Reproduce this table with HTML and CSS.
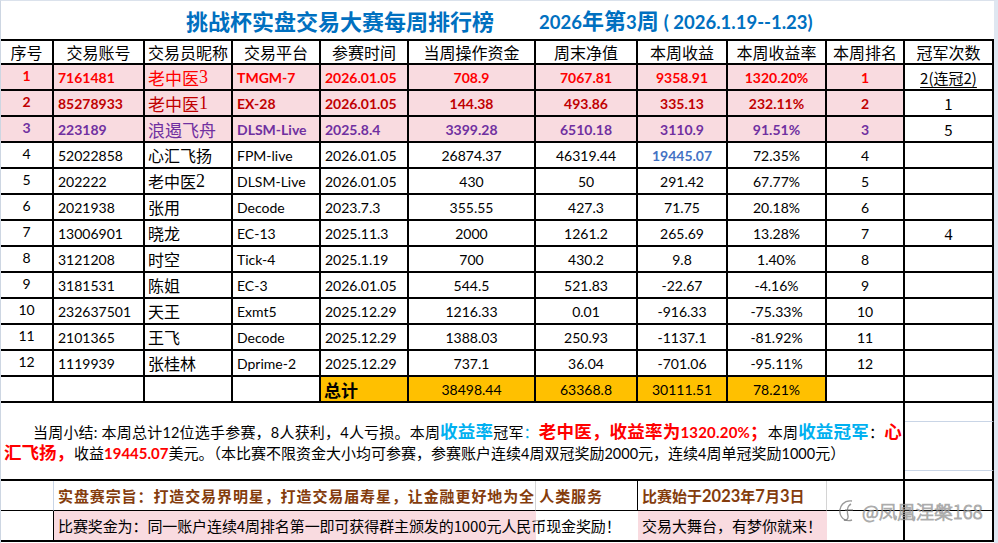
FILE: index.html
```html
<!DOCTYPE html>
<html lang="zh-CN">
<head>
<meta charset="utf-8">
<title>挑战杯实盘交易大赛每周排行榜</title>
<link rel="stylesheet" href="styles.css">
</head>
<body>
<div class="page">
  <header class="title">
    <h1 class="t1">挑战杯实盘交易大赛每周排行榜</h1>
    <h2 class="t2"><span class="tn">2026</span>年第<span class="tn">3</span>周 <span class="tn">( 2026.1.19--1.23)</span></h2>
  </header>

  <div class="grid">
    <div class="c h">序号</div>
    <div class="c h">交易账号</div>
    <div class="c h">交易员昵称</div>
    <div class="c h">交易平台</div>
    <div class="c h">参赛时间</div>
    <div class="c h">当周操作资金</div>
    <div class="c h">周末净值</div>
    <div class="c h">本周收益</div>
    <div class="c h">本周收益率</div>
    <div class="c h">本周排名</div>
    <div class="c h">冠军次数</div>

    <div class="c pk red b ctr no">1</div>
    <div class="c pk red b lft">7161481</div>
    <div class="c pk red nick big">老中医<span class="ser">3</span></div>
    <div class="c pk red b lft">TMGM-7</div>
    <div class="c pk red b lft">2026.01.05</div>
    <div class="c pk red b ctr">708.9</div>
    <div class="c pk red b ctr">7067.81</div>
    <div class="c pk red b ctr">9358.91</div>
    <div class="c pk red b ctr">1320.20%</div>
    <div class="c pk red b ctr">1</div>
    <div class="c champ"><u>2(连冠2)</u></div>

    <div class="c pk dred b ctr no">2</div>
    <div class="c pk dred b lft">85278933</div>
    <div class="c pk dred nick big">老中医<span class="ser">1</span></div>
    <div class="c pk dred b lft">EX-28</div>
    <div class="c pk dred b lft">2026.01.05</div>
    <div class="c pk dred b ctr">144.38</div>
    <div class="c pk dred b ctr">493.86</div>
    <div class="c pk dred b ctr">335.13</div>
    <div class="c pk dred b ctr">232.11%</div>
    <div class="c pk dred b ctr">2</div>
    <div class="c champ">1</div>

    <div class="c pk pur b ctr no">3</div>
    <div class="c pk pur b lft">223189</div>
    <div class="c pk pur nick big">浪遏飞舟</div>
    <div class="c pk pur b lft">DLSM-Live</div>
    <div class="c pk pur b lft">2025.8.4</div>
    <div class="c pk pur b ctr">3399.28</div>
    <div class="c pk pur b ctr">6510.18</div>
    <div class="c pk pur b ctr">3110.9</div>
    <div class="c pk pur b ctr">91.51%</div>
    <div class="c pk pur b ctr">3</div>
    <div class="c champ">5</div>

    <div class="c ctr no">4</div>
    <div class="c lft">52022858</div>
    <div class="c nick">心汇飞扬</div>
    <div class="c lft">FPM-live</div>
    <div class="c lft">2026.01.05</div>
    <div class="c ctr">26874.37</div>
    <div class="c ctr">46319.44</div>
    <div class="c ctr b blue">19445.07</div>
    <div class="c ctr">72.35%</div>
    <div class="c ctr">4</div>
    <div class="c champ"></div>

    <div class="c ctr no">5</div>
    <div class="c lft">202222</div>
    <div class="c nick">老中医<span class="ser">2</span></div>
    <div class="c lft">DLSM-Live</div>
    <div class="c lft">2026.01.05</div>
    <div class="c ctr">430</div>
    <div class="c ctr">50</div>
    <div class="c ctr">291.42</div>
    <div class="c ctr">67.77%</div>
    <div class="c ctr">5</div>
    <div class="c champ"></div>

    <div class="c ctr no">6</div>
    <div class="c lft">2021938</div>
    <div class="c nick">张用</div>
    <div class="c lft">Decode</div>
    <div class="c lft">2023.7.3</div>
    <div class="c ctr">355.55</div>
    <div class="c ctr">427.3</div>
    <div class="c ctr">71.75</div>
    <div class="c ctr">20.18%</div>
    <div class="c ctr">6</div>
    <div class="c champ"></div>

    <div class="c ctr no">7</div>
    <div class="c lft">13006901</div>
    <div class="c nick">晓龙</div>
    <div class="c lft">EC-13</div>
    <div class="c lft">2025.11.3</div>
    <div class="c ctr">2000</div>
    <div class="c ctr">1261.2</div>
    <div class="c ctr">265.69</div>
    <div class="c ctr">13.28%</div>
    <div class="c ctr">7</div>
    <div class="c champ ser4">4</div>

    <div class="c ctr no">8</div>
    <div class="c lft">3121208</div>
    <div class="c nick">时空</div>
    <div class="c lft">Tick-4</div>
    <div class="c lft">2025.1.19</div>
    <div class="c ctr">700</div>
    <div class="c ctr">430.2</div>
    <div class="c ctr">9.8</div>
    <div class="c ctr">1.40%</div>
    <div class="c ctr">8</div>
    <div class="c champ"></div>

    <div class="c ctr no">9</div>
    <div class="c lft">3181531</div>
    <div class="c nick">陈姐</div>
    <div class="c lft">EC-3</div>
    <div class="c lft">2026.01.05</div>
    <div class="c ctr">544.5</div>
    <div class="c ctr">521.83</div>
    <div class="c ctr">-22.67</div>
    <div class="c ctr">-4.16%</div>
    <div class="c ctr">9</div>
    <div class="c champ"></div>

    <div class="c ctr no">10</div>
    <div class="c lft">232637501</div>
    <div class="c nick">天王</div>
    <div class="c lft">Exmt5</div>
    <div class="c lft">2025.12.29</div>
    <div class="c ctr">1216.33</div>
    <div class="c ctr">0.01</div>
    <div class="c ctr">-916.33</div>
    <div class="c ctr">-75.33%</div>
    <div class="c ctr">10</div>
    <div class="c champ"></div>

    <div class="c ctr no">11</div>
    <div class="c lft">2101365</div>
    <div class="c nick">王飞</div>
    <div class="c lft">Decode</div>
    <div class="c lft">2025.12.29</div>
    <div class="c ctr">1388.03</div>
    <div class="c ctr">250.93</div>
    <div class="c ctr">-1137.1</div>
    <div class="c ctr">-81.92%</div>
    <div class="c ctr">11</div>
    <div class="c champ"></div>

    <div class="c ctr no">12</div>
    <div class="c lft">1119939</div>
    <div class="c nick">张桂林</div>
    <div class="c lft">Dprime-2</div>
    <div class="c lft">2025.12.29</div>
    <div class="c ctr">737.1</div>
    <div class="c ctr">36.04</div>
    <div class="c ctr">-701.06</div>
    <div class="c ctr">-95.11%</div>
    <div class="c ctr">12</div>
    <div class="c champ"></div>

    <div class="c"></div>
    <div class="c"></div>
    <div class="c"></div>
    <div class="c"></div>
    <div class="c gold total">总计</div>
    <div class="c gold ctr">38498.44</div>
    <div class="c gold ctr">63368.8</div>
    <div class="c gold ctr">30111.51</div>
    <div class="c gold ctr">78.21%</div>
    <div class="c"></div>
    <div class="c"></div>

    <div class="c summary">
      <p class="l1">当周小结<span class="n">: </span>本周总计<span class="n">12</span>位选手参赛，<span class="n">8</span>人获利，<span class="n">4</span>人亏损。本周<b class="cy">收益率</b>冠军<span class="cy">：</span><b class="rd">老中医，收益率为<span class="nb">1320.20%</span>；</b>本周<b class="cy">收益冠军</b>：<b class="rd">心</b></p>
      <p class="l2"><b class="rd">汇飞扬，</b>收益<b class="rd nb">19445.07</b>美元。（本比赛不限资金大小均可参赛，参赛账户连续<span class="n">4</span>周双冠奖励<span class="n">2000</span>元，连续<span class="n">4</span>周单冠奖励<span class="n">1000</span>元）</p>
    </div>
    <div class="c s1"></div>
    <div class="c s2"></div>
    <div class="c s3"></div>

    <div class="c fa"></div>
    <div class="c fb">实盘赛宗旨：打造交易界明星，打造交易届寿星，让金融更好地为全 人类服务</div>
    <div class="c fc"></div>
    <div class="c fd">比赛始于<span class="fn">2023</span>年<span class="fn">7</span>月<span class="fn">3</span>日</div>
    <div class="c fe"></div>
    <div class="c ff"></div>

    <div class="c ga"></div>
    <div class="c gb">比赛奖金为：同一账户连续4周排名第一即可获得群主颁发的1000元人民币现金奖励！</div>
    <div class="c gc"></div>
    <div class="c gd">交易大舞台，有梦你就来！</div>
    <div class="c ge"></div>
    <div class="c gf"></div>
  </div>

  <div class="mark">
    <svg class="mark-logo" width="22" height="26" viewBox="0 0 22 26" aria-hidden="true">
      <path d="M15 3 C7 2 2 8 3 15 C4 21 10 24 15 22" fill="none" stroke="rgba(110,110,110,0.7)" stroke-width="1.4"/>
      <path d="M14 6 C10 8 10 14 11 18 C11.5 21 9 23 7 22" fill="none" stroke="rgba(110,110,110,0.7)" stroke-width="1.4"/>
      <path d="M8 12 L16 12" fill="none" stroke="rgba(110,110,110,0.7)" stroke-width="1.4"/>
    </svg>
    <span class="mark-text">@凤凰涅槃168</span>
  </div>
</div>
</body>
</html>
```

FILE: styles.css
```css
html, body {
  margin: 0;
  padding: 0;
  background: #ffffff;
}

body {
  font-family: "Noto Sans CJK SC", sans-serif;
  color: #000;
  overflow: hidden;
}

.page {
  position: relative;
  width: 998px;
  height: 543px;
  box-sizing: border-box;
  border-left: 1px solid #cdd6e2;
  border-top: 1px solid #dbe2ec;
  border-right: 4px solid #dfe7f1;
  overflow: hidden;
}

.title {
  height: 38px;
  display: flex;
  align-items: center;
  padding-left: 185px;
  gap: 45px;
  color: #0070c0;
}

.t1, .t2 {
  margin: 0;
  font-weight: 700;
  font-size: 22px;
  line-height: 1;
  white-space: nowrap;
}

.t2 .tn {
  font-family: "Lato", "Noto Sans CJK SC", sans-serif;
  font-size: 18.5px;
  font-weight: 700;
}

.grid {
  display: grid;
  grid-template-columns: 53px 91px 88px 88px 88px 127px 102px 90px 99px 78px 89px;
  grid-template-rows: 24px repeat(13, 26px) 19px 49px 10px 30px 31px;
  border-top: 2px solid #000;
}

.c {
  box-sizing: border-box;
  border-right: 2px solid #000;
  border-bottom: 2px solid #000;
  display: flex;
  align-items: center;
  font-family: "Lato", "Noto Sans CJK SC", sans-serif;
  font-size: 14px;
  white-space: nowrap;
  min-width: 0;
}

.h {
  justify-content: center;
  font-family: "Noto Sans CJK SC", sans-serif;
  font-size: 16px;
  font-weight: 400;
}

.ctr { justify-content: center; }
.lft { padding-left: 4px; }
.no { padding-bottom: 3px; }
.b { font-weight: 700; }

.nick {
  padding-left: 3px;
  font-family: "Noto Sans CJK SC", sans-serif;
  font-size: 16px;
}
.nick.big { font-size: 17px; }
.nick .ser { font-family: "Liberation Serif", serif; font-size: 18px; }

.pk { background: #f9dbe0; }
.red { color: #ff0000; }
.dred { color: #c00000; }
.pur { color: #7030a0; }
.blue { color: #4472c4; }

.champ {
  justify-content: center;
  font-family: "Noto Sans CJK SC", sans-serif;
  font-size: 15px;
}
.champ u { text-underline-offset: 3px; }
.ser4 { font-family: "Liberation Serif", serif; font-size: 16px; padding-top: 4px; }

.gold { background: #ffc000; }
.total {
  padding-left: 3px;
  font-family: "Noto Sans CJK SC", sans-serif;
  font-size: 17px;
  font-weight: 700;
}

.summary {
  grid-column: 1 / 11;
  grid-row: 15 / 18;
  display: block;
  padding: 18px 0 0 3px;
  font-family: "Noto Sans CJK SC", sans-serif;
  font-size: 15px;
  white-space: normal;
}
.summary p {
  margin: 0;
  height: 20px;
  line-height: 20px;
  white-space: nowrap;
}
.summary .l1 { text-indent: 29px; letter-spacing: 0.2px; }
.summary .l2 { margin-top: 1px; }
.summary .n { font-family: "Lato", sans-serif; font-size: 14.5px; }
.summary b { font-size: 17.5px; font-weight: 700; }
.summary .cy { color: #00b0f0; }
.summary .rd { color: #ff0000; }
.summary .nb { font-family: "Lato", sans-serif; font-size: 15px; font-weight: 700; }

.s1 { grid-column: 11; grid-row: 15; border-bottom: 1px solid #c9d5e6; }
.s2 { grid-column: 11; grid-row: 16; border-bottom: 1px solid #c9d5e6; }
.s3 { grid-column: 11; grid-row: 17; }

.fa, .fb, .fc, .fd, .fe, .ff { border-bottom: 1px solid #000; }
.fa { border-right: 1px solid #c9d5e6; }
.fb {
  grid-column: 2 / 7;
  border-right: 1px solid #d4d4d4;
  padding-left: 4px;
  overflow: visible;
  color: #843c0c;
  font-family: "Noto Sans CJK SC", sans-serif;
  font-size: 15px;
  font-weight: 700;
  letter-spacing: 0.9px;
}
.fc { border-right: 1px solid #000; }
.fd {
  grid-column: 8 / 10;
  border-right: 1px solid #d4d4d4;
  padding-left: 4px;
  color: #843c0c;
  font-family: "Noto Sans CJK SC", sans-serif;
  font-size: 15px;
  font-weight: 700;
}
.fd .fn { font-family: "Lato", sans-serif; font-size: 16.5px; font-weight: 700; }

.ga { border-right: 1px solid #000; }
.gb {
  grid-column: 2 / 7;
  border-right: 0;
  background: #f9dbe0;
  padding-left: 4px;
  overflow: visible;
  font-family: "Noto Sans CJK SC", sans-serif;
  font-size: 15px;
  letter-spacing: -0.1px;
}
.gc { border-right: 0; }
.gd {
  grid-column: 8 / 10;
  border-right: 0;
  background: #f9dbe0;
  padding-left: 4px;
  font-family: "Noto Sans CJK SC", sans-serif;
  font-size: 15px;
}

.mark {
  position: absolute;
  left: 836px;
  top: 497px;
  display: flex;
  align-items: center;
  gap: 3px;
  white-space: nowrap;
}
.mark-text {
  font-family: "Noto Sans CJK SC", sans-serif;
  font-size: 18.5px;
  font-weight: 300;
  line-height: 26px;
  color: rgba(255, 255, 255, 0.7);
  -webkit-text-stroke: 1px rgba(100, 100, 100, 0.55);
}
```
